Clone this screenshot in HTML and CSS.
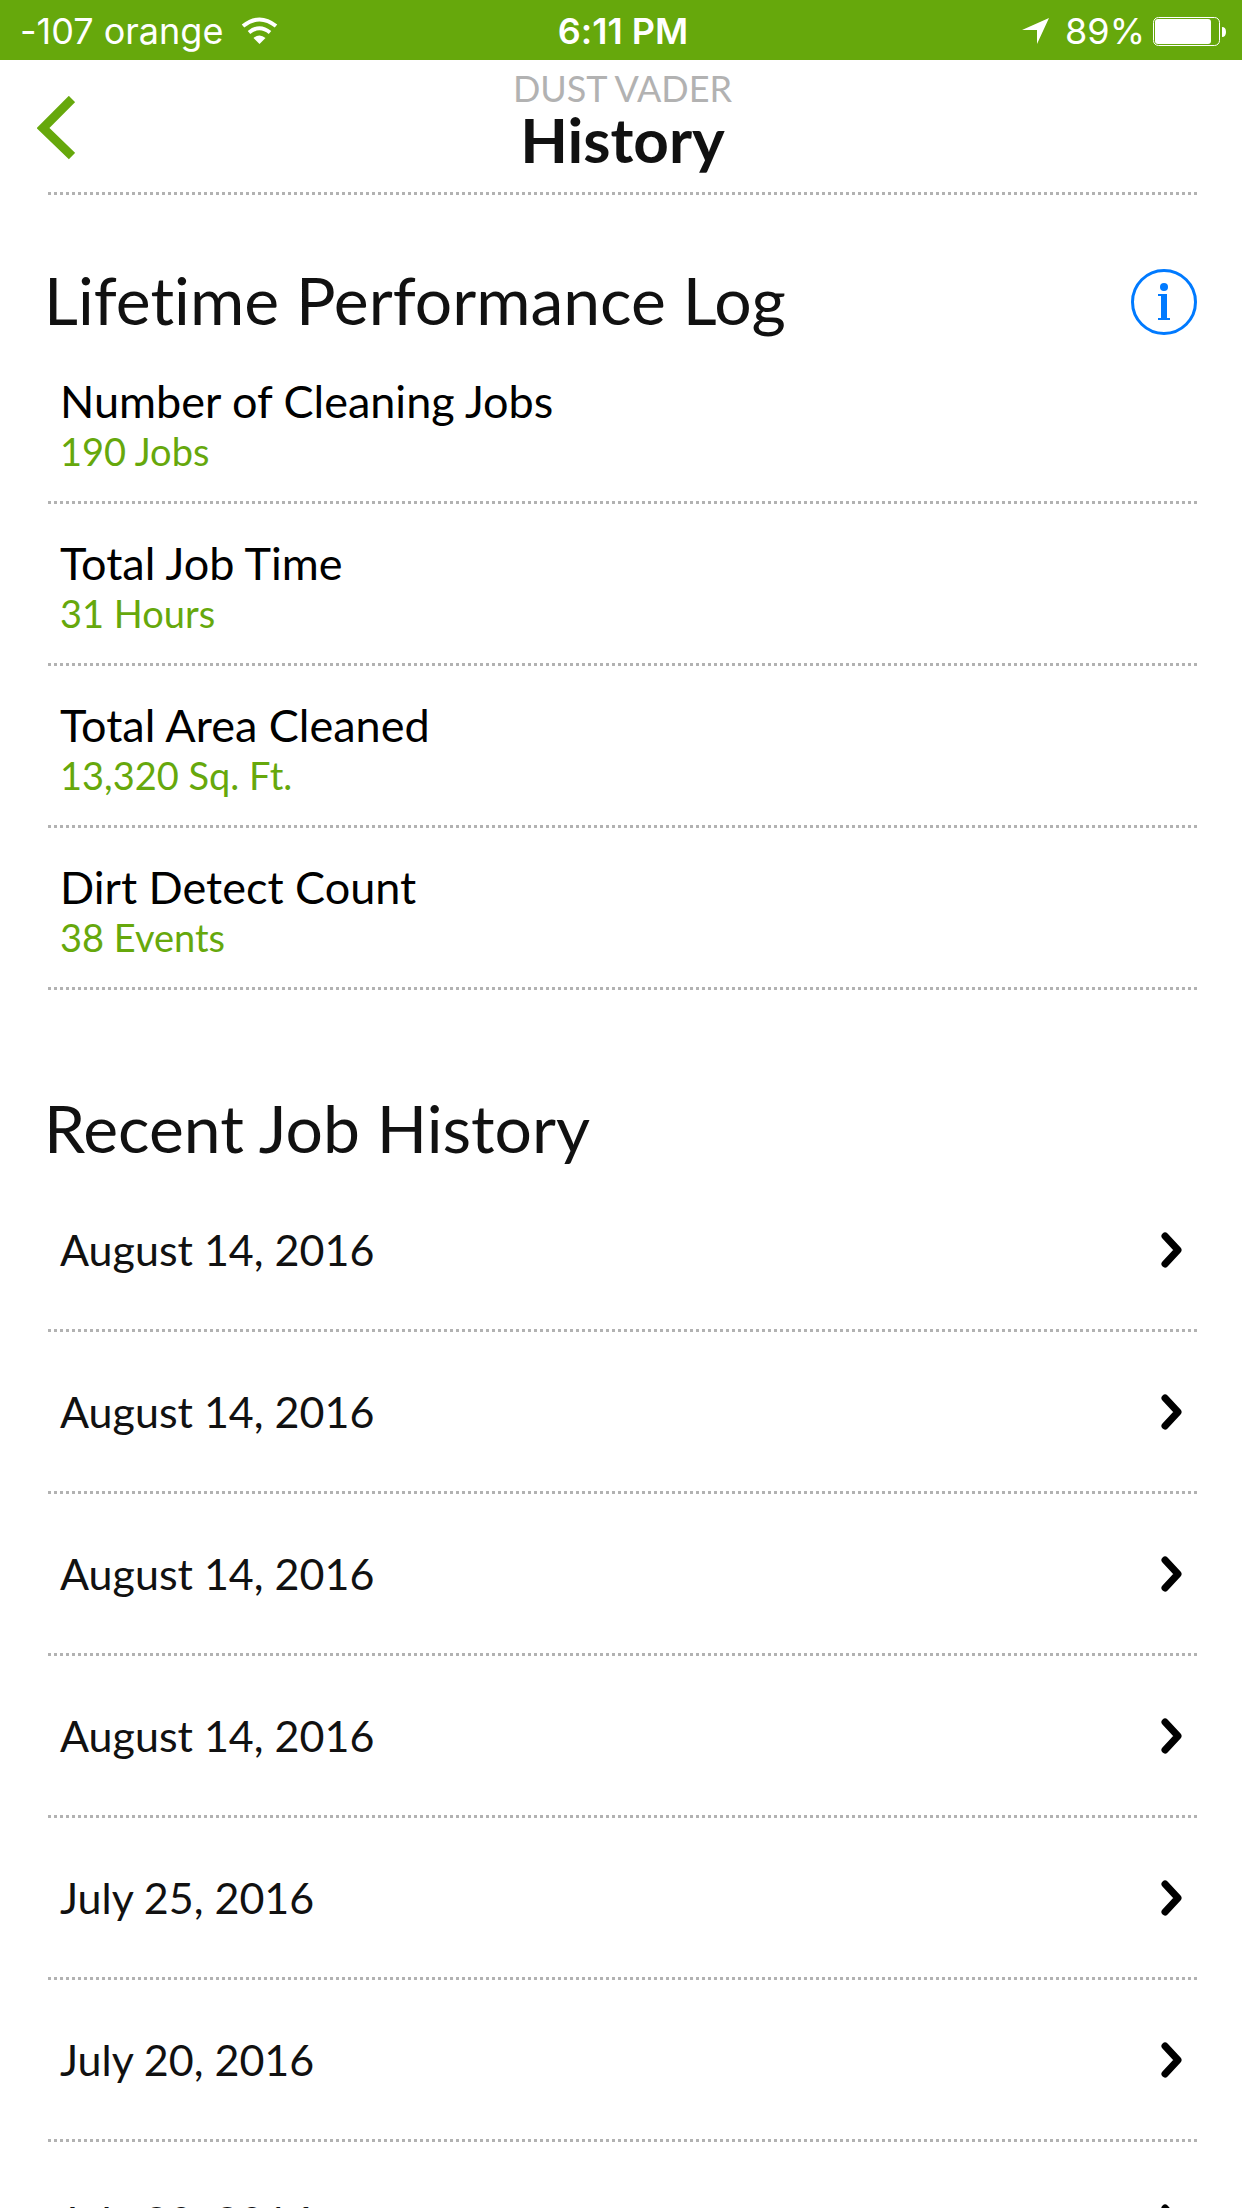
FILE: index.html
```html
<!DOCTYPE html>
<html lang="en">
<head>
  <meta charset="UTF-8" />
  <meta name="viewport" content="width=device-width, initial-scale=1.0" />
  <title>History</title>
  <link rel="stylesheet" href="styles.css">
</head>
<body>
  <!-- shared chevron for the job rows -->
  <svg width="0" height="0" class="symbols" aria-hidden="true">
    <symbol id="chevron" viewBox="0 0 21 36">
      <path d="M4 4L17 18L4 32" fill="none" stroke="#000" stroke-width="7" stroke-linecap="round" stroke-linejoin="round" />
    </symbol>
  </svg>

  <div class="screen">
    <div class="status-bar">
      <div class="status-left">
        <span>-107 orange</span>
        <svg class="wifi" width="37" height="28" viewBox="0 0 37 28" aria-hidden="true">
          <path d="M2 9Q18.500 -4 35 9" fill="none" stroke="#fff" stroke-width="4" />
          <path d="M8 15.500Q18.500 7 29 15.500" fill="none" stroke="#fff" stroke-width="4" />
          <path d="M12.500 21Q18.500 16 24.500 21L18.500 27Z" fill="#fff" />
        </svg>
      </div>
      <div class="status-time">6:11 PM</div>
      <div class="status-right">
        <svg class="location" width="27" height="28" viewBox="0 0 27 28" aria-hidden="true">
          <path d="M27 1L0 13H15V27Z" fill="#fff" />
        </svg>
        <span>89%</span>
        <svg class="battery" width="73" height="29" viewBox="0 0 73 29" aria-hidden="true">
          <rect x="0.500" y="0.500" width="66" height="28" rx="5" fill="none" stroke="#fff" />
          <rect x="2" y="2" width="56" height="25" rx="3" fill="#fff" />
          <path d="M69 10Q73 10 73 15T69 20Z" fill="#fff" />
        </svg>
      </div>
    </div>

    <header class="header">
      <button class="back" type="button" aria-label="Back">
        <svg width="38" height="64" viewBox="0 0 38 64">
          <path d="M35 3L6 32L35 60" fill="none" stroke="#66a80c" stroke-width="9" />
        </svg>
      </button>
      <div class="titles">
        <div class="robot-name">DUST VADER</div>
        <h1>History</h1>
      </div>
    </header>

    <main>
      <section class="log">
        <div class="section-head">
          <h2>Lifetime Performance Log</h2>
          <button class="info" type="button" aria-label="Info">
            <svg width="66" height="66" viewBox="0 0 66 66">
              <circle cx="33" cy="33" r="31.500" fill="none" stroke="#007aff" stroke-width="3" />
              <circle cx="33" cy="18" r="4" fill="#007aff" />
              <path d="M27 25H36V49H39V51H27V49H30V27H27Z" fill="#007aff" />
            </svg>
          </button>
        </div>
        <dl>
          <div class="stat">
            <dt>Number of Cleaning Jobs</dt>
            <dd>190 Jobs</dd>
          </div>
          <div class="stat">
            <dt>Total Job Time</dt>
            <dd>31 Hours</dd>
          </div>
          <div class="stat">
            <dt>Total Area Cleaned</dt>
            <dd>13,320 Sq. Ft.</dd>
          </div>
          <div class="stat">
            <dt>Dirt Detect Count</dt>
            <dd>38 Events</dd>
          </div>
        </dl>
      </section>

      <section class="jobs">
        <div class="section-head">
          <h2>Recent Job History</h2>
        </div>
        <ul>
          <li><button class="job" type="button">August 14, 2016 <svg width="21" height="36"><use href="#chevron" /></svg></button></li>
          <li><button class="job" type="button">August 14, 2016 <svg width="21" height="36"><use href="#chevron" /></svg></button></li>
          <li><button class="job" type="button">August 14, 2016 <svg width="21" height="36"><use href="#chevron" /></svg></button></li>
          <li><button class="job" type="button">August 14, 2016 <svg width="21" height="36"><use href="#chevron" /></svg></button></li>
          <li><button class="job" type="button">July 25, 2016 <svg width="21" height="36"><use href="#chevron" /></svg></button></li>
          <li><button class="job" type="button">July 20, 2016 <svg width="21" height="36"><use href="#chevron" /></svg></button></li>
          <li><button class="job" type="button">July 20, 2016 <svg width="21" height="36"><use href="#chevron" /></svg></button></li>
        </ul>
      </section>
    </main>
  </div>
</body>
</html>
```
FILE: styles.css
```css
* {
  box-sizing: border-box;
}

body {
  margin: 0;
  background-color: #fff;
  color: #111;
  font-family: Lato, "Liberation Sans", sans-serif;
  font-variant-ligatures: none;
}

h1, h2, dl, dd, ul {
  margin: 0;
  padding: 0;
  font-weight: 400;
}

ul {
  list-style: none;
}

button {
  padding: 0;
  border: 0;
  background: none;
  color: inherit;
  font: inherit;
  cursor: pointer;
}

svg {
  display: block;
  flex: none;
}

.symbols {
  position: absolute;
}

.screen {
  height: 100vh;
  overflow: hidden;
}

/* Status bar */
.status-bar {
  display: grid;
  grid-template-columns: 1fr auto 1fr;
  align-items: center;
  height: 60px;
  padding: 2px 16px 0 20px;
  background-color: #66a80c;
  color: #fff;
  font-family: Inter, "Liberation Sans", sans-serif;
  font-size: 36px;
  line-height: 58px;
}

.status-left,
.status-right {
  display: flex;
  align-items: center;
}

.status-left {
  gap: 18px;
}

.status-right {
  justify-content: flex-end;
  gap: 8px;
}

.location {
  margin-right: 8px;
}

.status-time {
  font-weight: 600;
}

/* Dotted rules: 3px squares, 3px apart */
.header,
.stat,
.jobs li {
  background: repeating-linear-gradient(to right, #b2b2b2 0 3px, transparent 3px 6px) left bottom / 100% 3px no-repeat;
}

.header {
  display: grid;
  grid-template-columns: 60px 1fr 60px;
  align-items: center;
  height: 135px;
  margin: 0 45px 0 48px;
}

.back {
  justify-self: start;
  margin-left: -11px;
}

.titles {
  align-self: start;
  padding-top: 8px;
  text-align: center;
}

.robot-name {
  color: #b2b2b2;
  font-size: 36px;
  line-height: 40px;
}

h1 {
  font-size: 62px;
  font-weight: 700;
  line-height: 62px;
}

main {
  padding: 0 45px 0 48px;
}

.section-head {
  display: flex;
  align-items: center;
  justify-content: space-between;
}

h2 {
  margin-left: -4px;
  font-size: 66px;
  line-height: 84px;
}

.info {
  margin-top: 4px;
}

.log {
  padding-top: 63px;
}

.stat {
  padding: 33px 12px 29px;
}

dt {
  color: #000;
  font-size: 45px;
  line-height: 52px;
}

dd {
  color: #66a80c;
  font-size: 38px;
  line-height: 48px;
}

.jobs {
  padding-top: 96px;
}

.job {
  display: flex;
  align-items: center;
  justify-content: space-between;
  width: 100%;
  height: 162px;
  padding: 0 15px 3px 12px;
  font-size: 43px;
}
```
